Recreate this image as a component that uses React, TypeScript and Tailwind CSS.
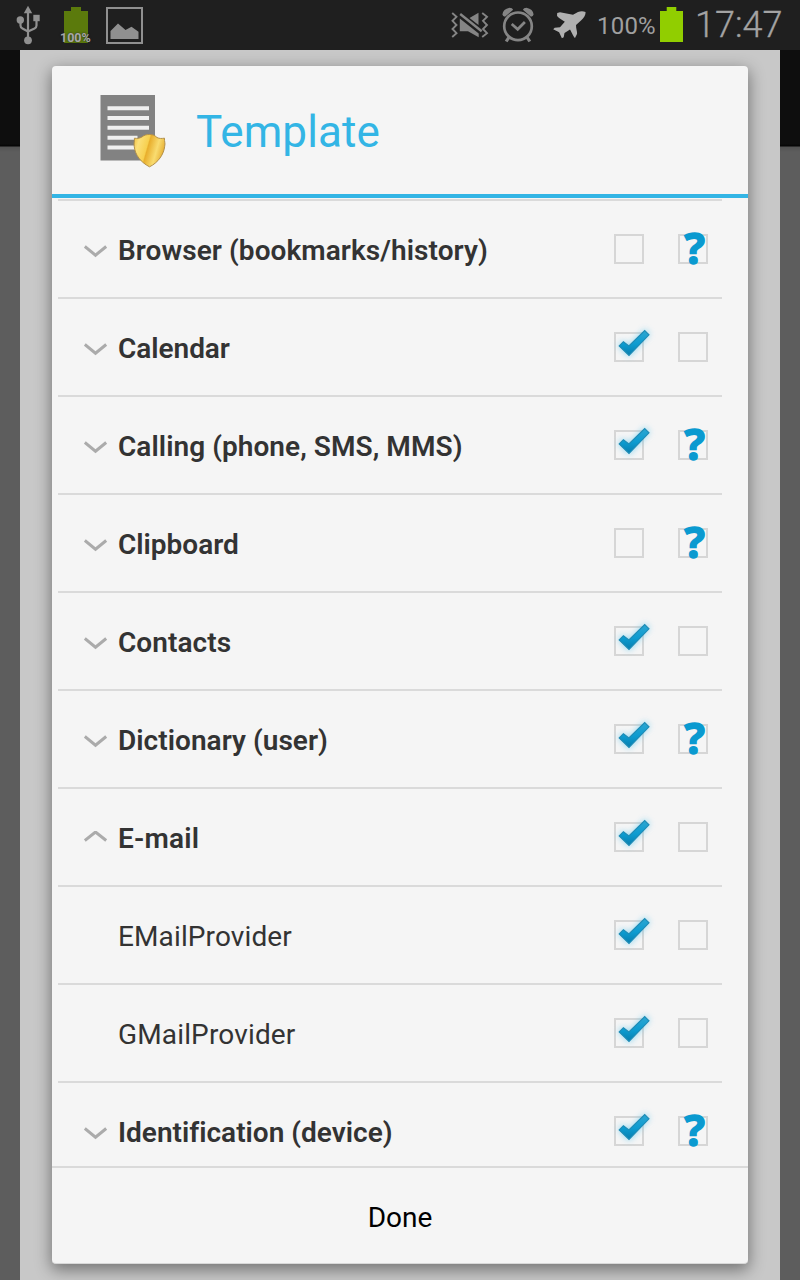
import React from "react";

type Item = {
  label: string;
  kind: "collapsed" | "expanded" | "child";
  checked: boolean;
  ask: boolean;
  tracking: string;
};

const items: Item[] = [
  { label: "Browser (bookmarks/history)", kind: "collapsed", checked: false, ask: true, tracking: "tracking-[0.07px]" },
  { label: "Calendar", kind: "collapsed", checked: true, ask: false, tracking: "tracking-[-0.04px]" },
  { label: "Calling (phone, SMS, MMS)", kind: "collapsed", checked: true, ask: true, tracking: "tracking-[0.06px]" },
  { label: "Clipboard", kind: "collapsed", checked: false, ask: true, tracking: "tracking-[0px]" },
  { label: "Contacts", kind: "collapsed", checked: true, ask: false, tracking: "tracking-[0.06px]" },
  { label: "Dictionary (user)", kind: "collapsed", checked: true, ask: true, tracking: "tracking-[0.04px]" },
  { label: "E-mail", kind: "expanded", checked: true, ask: false, tracking: "tracking-[0.2px]" },
  { label: "EMailProvider", kind: "child", checked: true, ask: false, tracking: "tracking-[0.12px]" },
  { label: "GMailProvider", kind: "child", checked: true, ask: false, tracking: "tracking-[0.15px]" },
  { label: "Identification (device)", kind: "collapsed", checked: true, ask: true, tracking: "tracking-[0.01px]" },
];

function UsbIcon() {
  return (
    <svg className="ml-4 h-10 w-6 shrink-0" viewBox="0 0 24 40" fill="none" stroke="#909090" strokeWidth="2.200">
      <path d="M12 7v28" />
      <path d="M4.500 15v5.500q0 2 2 3l5.500 3M20.500 14v6.500q0 2-2 3L12 26.500" />
      <path d="M12 .7l4.200 7.600H7.800z" fill="#909090" stroke="none" />
      <circle cx="4.300" cy="15" r="3.700" fill="#909090" stroke="none" />
      <path d="M17.300 9.800h6.400v6.400h-6.400z" fill="#909090" stroke="none" />
      <circle cx="12" cy="35.300" r="3.900" fill="#909090" stroke="none" />
    </svg>
  );
}

function GreenBattery({ fill }: { fill: string }) {
  return (
    <svg className="h-full w-full" viewBox="0 0 24 36" preserveAspectRatio="none" fill={fill}>
      <path d="M7 0h10v4h7v32H0V4h7z" />
    </svg>
  );
}

function PictureIcon() {
  return (
    <svg className="h-[37px] w-[37px]" viewBox="0 0 37 37">
      <path d="M1 1h35v35H1z" fill="none" stroke="#909090" strokeWidth="2" />
      <path d="M4.500 32V24l7.500-7.500 7.500 6.500 6-3.200 7 5V32z" fill="#909090" />
    </svg>
  );
}

function MuteIcon() {
  return (
    <svg className="h-8 w-[38px]" viewBox="0 0 38 32" fill="#858585">
      <g fill="none" stroke="#858585" strokeWidth="1.900">
        <path d="M1.200 4l4.300 3.800-4 4 4 4.200-4 4 4 4.200-4.300 3.800" />
        <path d="M31.200 4l4.800 3.800-4 4 4 4.200-4 4 4 4.200-4.800 3.800" />
      </g>
      <path d="M8.800 9.500L27.700 24.500v3.700L17 22.300H8.800zM18.500 9L27.500 3.700V16z" />
      <path d="M9.200 5l21.500 17.300" stroke="#858585" strokeWidth="2.400" />
    </svg>
  );
}

function AlarmIcon() {
  return (
    <svg className="h-9 w-8" viewBox="0 0 32 36" fill="none" stroke="#858585">
      <circle cx="16" cy="19.300" r="13.800" strokeWidth="2.700" />
      <path d="M9.700 17l6 5.300 7.200-7.300" strokeWidth="2.700" />
      <path d="M.400 7.500Q1 2 7.500.700q3 0 3.600 2L3 9.800Q.800 9.500.400 7.500zM31.600 7.500Q31 2 24.500.700q-3 0-3.600 2L29 9.800q2.200-.300 2.600-2.300z" fill="#858585" stroke="none" />
      <path d="M6.800 30.500l-2.600 4M25.200 30.500l2.600 4" strokeWidth="3.200" />
    </svg>
  );
}

function PlaneIcon() {
  return (
    <svg className="h-[28px] w-[33px]" viewBox="0 0 33 28" fill="#b0b0b0">
      <path d="M32.500 1Q33 5 28 9.500l-5 4.500c0 4 1.400 6.300 1 9l-2 4c-1.500-1-3.500-6-5-8.500l-5.500 3.500-.8 4.300-1.800 1-2.800-6L.2 18.300l1.500-1.600 5.300-.4 4.800-5.500C9 8.500 5 7 4 4.500l.2-2.500L7 1.300l13 2.400L25 1Q29-.5 32.500 1z" />
    </svg>
  );
}

function StatusBar() {
  return (
    <header className="flex h-[50px] shrink-0 items-center bg-[#1f1f1f] font-[Roboto,sans-serif]">
      <UsbIcon />
      <div className="relative ml-6 h-9 w-6">
        <GreenBattery fill="#5b7a0c" />
        <span className="absolute -left-[4px] top-[23.500px] text-[12.500px] leading-[14px] font-bold text-[#a8a8a8] [text-shadow:0_0_2px_#222]">
          100%
        </span>
      </div>
      <div className="ml-[18px]"><PictureIcon /></div>
      <div className="ml-[308px]"><MuteIcon /></div>
      <div className="ml-[13px]"><AlarmIcon /></div>
      <div className="ml-[19px]"><PlaneIcon /></div>
      <span className="ml-[11px] w-[63px] pt-px text-[24px] leading-[50px] tracking-[0.2px] whitespace-nowrap text-[#a0a0a0]">100%</span>
      <div className="h-[35px] w-[23px] -translate-y-px"><GreenBattery fill="#91ce00" /></div>
      <span className="ml-[12px] text-[36px] leading-[50px] font-light whitespace-nowrap text-[#a3a3a3] [-webkit-text-stroke:0.3px_#a3a3a3]">17:47</span>
    </header>
  );
}

function TemplateIcon() {
  return (
    <svg className="h-20 w-[72px]" viewBox="0 0 72 80">
      <defs>
        <linearGradient id="shield" x1="0" x2="1" y1="0" y2="0.300">
          <stop offset="0" stopColor="#f0bd3c" />
          <stop offset="0.200" stopColor="#fbe07a" />
          <stop offset="0.480" stopColor="#f7d04f" />
          <stop offset="0.520" stopColor="#e8ae2c" />
          <stop offset="0.800" stopColor="#f9dc70" />
          <stop offset="1" stopColor="#e9b53c" />
        </linearGradient>
        <filter id="soft"><feGaussianBlur stdDeviation="0.700" /></filter>
      </defs>
      <g filter="url(#soft)">
        <path d="M2.500 4h54.500v65.500H2.500z" fill="#828282" />
        <path d="M9.500 17.300h41.500M9.500 27h41.500M9.500 36.800h41.500M9.500 46.700h30M9.500 56.500h28" stroke="#f0f0f0" strokeWidth="4" />
      </g>
      <path
        d="M51.500 43.500c3 0 5 .6 7.500 3 2.500 1.300 4.500 1 7.500.7-.3 3.500 1 4.500.2 8-.8 8-6.500 16.500-15.200 20.600C43 71.500 37 64 36.200 55.200c-.5-3 .5-5 .2-8 3 .3 4.500.5 7.500-1.200 2.500-2 4.600-2.500 7.600-2.500z"
        fill="url(#shield)"
        stroke="#b39049"
        strokeWidth="1"
      />
    </svg>
  );
}

function Chevron({ up }: { up: boolean }) {
  return (
    <svg className="h-4 w-6" viewBox="0 0 24 16" fill="none" stroke="#ababab" strokeWidth="3">
      <path d={up ? "M.800 9.500L11.500 1l10.700 8.500" : "M.800 3.500L11.500 12.200 22.200 3.500"} />
    </svg>
  );
}

function CheckMark() {
  return (
    <svg className="absolute -top-[12px] -left-[6px] h-12 w-12" viewBox="-4 -10 48 48">
      <defs>
        <linearGradient id="tick" x1="0" x2="0" y1="0" y2="1">
          <stop offset="0" stopColor="#2ca6d2" />
          <stop offset="0.550" stopColor="#0c9bd0" />
          <stop offset="1" stopColor="#087eae" />
        </linearGradient>
        <filter id="glow" x="-40%" y="-40%" width="180%" height="180%">
          <feGaussianBlur stdDeviation="3" />
        </filter>
      </defs>
      <path d="M4 13.500l5-5 6 4.500L31-3l5 5L15 25z" fill="#5cc5ec" opacity="0.650" filter="url(#glow)" />
      <path d="M5.200 14l4.200-4.300 5.500 4.300L30.700-1.400l4.300 4.200L15 23.400z" fill="url(#tick)" stroke="#1e8bb5" strokeWidth="1.100" />
    </svg>
  );
}

function Box({ mark }: { mark?: "check" | "question" }) {
  return (
    <div className="relative h-[30px] w-[30px] border-2 border-[#d6d6d6]">
      {mark === "check" && <CheckMark />}
      {mark === "question" && (
        <span className="absolute -top-[11px] left-[4.500px] font-['Open_Sans',sans-serif] text-[43px] leading-[45px] font-bold text-[#0a9ad0] [-webkit-text-stroke:1.600px_#0a9ad0]">
          ?
        </span>
      )}
    </div>
  );
}

function Row({ item }: { item: Item }) {
  return (
    <li className="flex h-[98px] shrink-0 border-t-2 border-[#dadada]">
      <div className="mt-[42px] ml-[26px] w-[34px]">
        {item.kind !== "child" && <Chevron up={item.kind === "expanded"} />}
      </div>
      <span
        className={`flex-1 text-[28px] leading-[100px] whitespace-nowrap text-[#333] ${item.tracking} ${item.kind === "child" ? "font-normal" : "font-semibold"}`}
      >
        {item.label}
      </span>
      <div className="mt-[33px] mr-[14px] flex gap-[34px]">
        <Box mark={item.checked ? "check" : undefined} />
        <Box mark={item.ask ? "question" : undefined} />
      </div>
    </li>
  );
}

export default function App() {
  return (
    <div className="flex h-[1280px] w-[800px] flex-col overflow-hidden bg-[#5d5d5d] font-[Roboto,sans-serif]">
      <StatusBar />
      <div className="flex min-h-0 flex-1 bg-[linear-gradient(#0e0e0e_0,#0e0e0e_94px,#050505_96px,#535353_97px,#5d5d5d_102px)] px-5">
        <main className="flex flex-1 bg-[#c8c8c8] px-8 pt-4 pb-4">
          <section className="flex flex-1 flex-col overflow-hidden rounded-[4px] border-b border-[#d8d8d8] bg-[#f5f5f5] shadow-[0_5px_16px_1px_rgba(0,0,0,0.420)]">
            <div className="flex h-[132px] shrink-0 border-b-4 border-[#33b5e5]">
              <div className="mt-[25px] ml-[46px] w-[98px]"><TemplateIcon /></div>
              <h1 className="text-[44px] leading-[132px] font-normal tracking-[0.1px] text-[#33b5e5]">Template</h1>
            </div>
            <ul className="mt-px mr-[26px] ml-[6px] flex min-h-0 flex-1 flex-col overflow-hidden">
              {items.map((item) => <Row key={item.label} item={item} />)}
            </ul>
            <button className="h-[97px] shrink-0 border-t-2 border-[#dadada] pt-1 text-[28px] text-black">Done</button>
          </section>
        </main>
      </div>
    </div>
  );
}
